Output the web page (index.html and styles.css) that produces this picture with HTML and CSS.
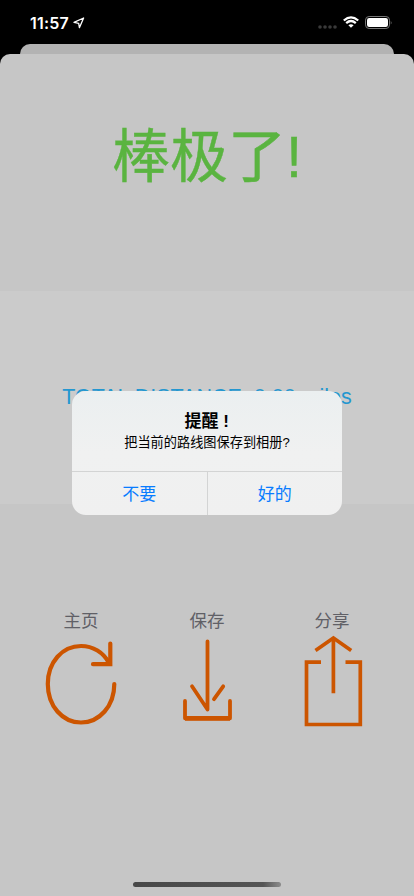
FILE: index.html
```html
<!DOCTYPE html>
<html lang="zh-CN">
<head>
<meta charset="utf-8">
<meta name="viewport" content="width=device-width, initial-scale=1">
<title>棒极了!</title>
<link rel="stylesheet" href="styles.css">
</head>
<body>
<div class="phone">
  <header class="status">
    <div class="clock"><span class="time">11:57</span>
      <svg class="location" width="12" height="12" viewBox="0 0 12 12"><path d="M1 5.3 10.6 1 6.4 10.7 5.7 6.3Z" fill="none" stroke="#fff" stroke-width="1.3" stroke-linejoin="round"/></svg>
    </div>
    <div class="indicators">
      <svg width="19" height="4" viewBox="0 0 19 4" class="cell"><g fill="#3a3a3a"><circle cx="2" cy="2" r="1.8"/><circle cx="7" cy="2" r="1.8"/><circle cx="12" cy="2" r="1.8"/><circle cx="17" cy="2" r="1.8"/></g></svg>
      <svg width="16" height="12" viewBox="0 0 16 12" class="wifi"><g fill="none" stroke="#fff" stroke-width="2.3"><path d="M.8 4.5Q8-1.8 15.2 4.5"/><path d="M3.2 7.100Q8 3 12.8 7.100"/></g><path d="M5.4 9.2Q8 7.1 10.6 9.2L8 11.8Z" fill="#fff"/></svg>
      <svg width="27" height="13" viewBox="0 0 27 13" class="battery"><rect x=".5" y=".5" width="24" height="12" rx="3.6" fill="none" stroke="#777"/><rect x="2" y="2" width="21" height="9" rx="2.2" fill="#fff"/><path d="M25.8 4.5Q27 6.5 25.8 8.5Z" fill="#888"/></svg>
    </div>
  </header>
  <div class="back-card"></div>
  <main class="sheet">
    <h1 class="title">棒极了!</h1>
    <section class="summary"><p class="distance">TOTAL DISTANCE: 0.00 miles</p></section>
    <nav class="actions">
      <a class="action"><span>主页</span>
        <svg width="76" height="100" viewBox="43 634 76 100" fill="none" stroke="#cc5500" stroke-width="4.200" stroke-linecap="round"><path d="M114.3 684C114.3 706 99.500 722.500 81 722.500S47.800 706 47.800 684 62.500 646 81 646C93 646 103.500 652.500 109 663"/><path d="M110.300 643.500V664.200H93"/></svg>
      </a>
      <a class="action"><span>保存</span>
        <svg width="56" height="100" viewBox="179 634 56 100" fill="none" stroke="#cc5500" stroke-linecap="round" stroke-linejoin="round"><path d="M207.500 641.500V709.500L192 686.300M223.200 686.300 214 699.200" stroke-width="3.800"/><path d="M185 701V718.300H230V701" stroke-width="3.800"/><path d="M185 718.300H230" stroke-linecap="butt" stroke-width="4.800"/></svg>
      </a>
      <a class="action"><span>分享</span>
        <svg width="64" height="100" viewBox="300 634 64 100" fill="none" stroke="#cc5500" stroke-width="3.700"><path d="M321 662.200H306.500V724.500H360.300V662.200H345.500M333.400 693.300V638"/><path d="M315.500 650.500 333.400 638 351.200 650.500"/></svg>
      </a>
    </nav>
    <div class="home-bar"></div>
  </main>
  <div class="overlay">
    <div class="alert" role="alertdialog">
      <div class="message"><h2>提醒<span class="mark">!</span></h2><p>把当前的路线图保存到相册?</p></div>
      <div class="buttons"><button>不要</button><button>好的</button></div>
    </div>
  </div>
</div>
</body>
</html>
```
FILE: styles.css
```css
* { box-sizing: border-box; }
body { margin: 0; background: #000; }
h1, h2, p { margin: 0; font-weight: 400; }
svg { display: block; }
.phone {
  position: relative;
  width: 414px;
  height: 896px;
  overflow: hidden;
  display: flex;
  flex-direction: column;
  font-family: "Liberation Sans", "Noto Sans CJK SC", sans-serif;
}
.status {
  height: 44px;
  padding: 0 22px 0 30px;
  display: flex;
  justify-content: space-between;
  align-items: flex-start;
  color: #fff;
}
.clock { display: flex; padding-top: 13px; gap: 3px; }
.time { font: 600 16px/20px Inter, sans-serif; letter-spacing: 0.2px; width: 40px; }
.location { margin-top: 4px; }
.indicators { display: flex; padding-top: 16px; }
.cell { margin-top: 9px; }
.wifi { margin: 0 6px 0 6px; }
.back-card {
  height: 10px;
  margin: 0 20px;
  background: #b3b3b3;
  border-radius: 10px 10px 0 0;
}
.sheet {
  flex: 1;
  display: flex;
  flex-direction: column;
  background: #c6c6c6;
  border-radius: 10px 10px 0 0;
}
.title {
  height: 237px;
  padding-top: 61px;
  text-align: center;
  font-size: 58px;
  line-height: 84px;
  color: #5ab440;
  -webkit-text-stroke: 0.4px #5ab440;
}
.summary { height: 213px; padding-top: 94px; background: #cbcbcb; }
.distance {
  text-align: center;
  font-size: 21.5px;
  line-height: 24px;
  color: #2497d0;
  white-space: nowrap;
}
.actions {
  display: grid;
  grid-template-columns: 126px 126px 124px;
  padding: 104px 0 0 18px;
  height: 379px;
}
.action {
  display: flex;
  flex-direction: column;
  align-items: center;
  font-size: 17.5px;
  line-height: 26px;
  color: #606066;
}
.home-bar {
  width: 148px;
  height: 5px;
  margin: -1px 0 0 133px;
  border-radius: 3px;
  background: linear-gradient(90deg, #484848, #555 88%, #8c8c8c);
}
.overlay {
  position: absolute;
  inset: 0;
  display: flex;
  justify-content: center;
  align-items: center;
  padding-top: 10px;
}
.alert {
  width: 270px;
  height: 124px;
  border-radius: 14px;
  overflow: hidden;
  background: linear-gradient(#ebeff0, #f0f1f1 50%, #f0f0f0);
}
.message { height: 80px; padding-top: 19px; text-align: center; color: #000; }
.message h2 { font-size: 17px; font-weight: 700; line-height: 24px; padding-left: 2px; }
.mark { display: inline-block; width: 11px; margin-left: 2px; }
.message p { font-size: 13.2px; line-height: 18px; }
.buttons { display: flex; height: 44px; border-top: 1px solid #d3d4d4; }
.buttons button {
  flex: 1;
  padding: 2px 0 0;
  border: 0;
  background: none;
  font: 17px/24px "Liberation Sans", "Noto Sans CJK SC", sans-serif;
  color: #087cff;
}
.buttons button + button { border-left: 1px solid #d3d4d4; }
```
